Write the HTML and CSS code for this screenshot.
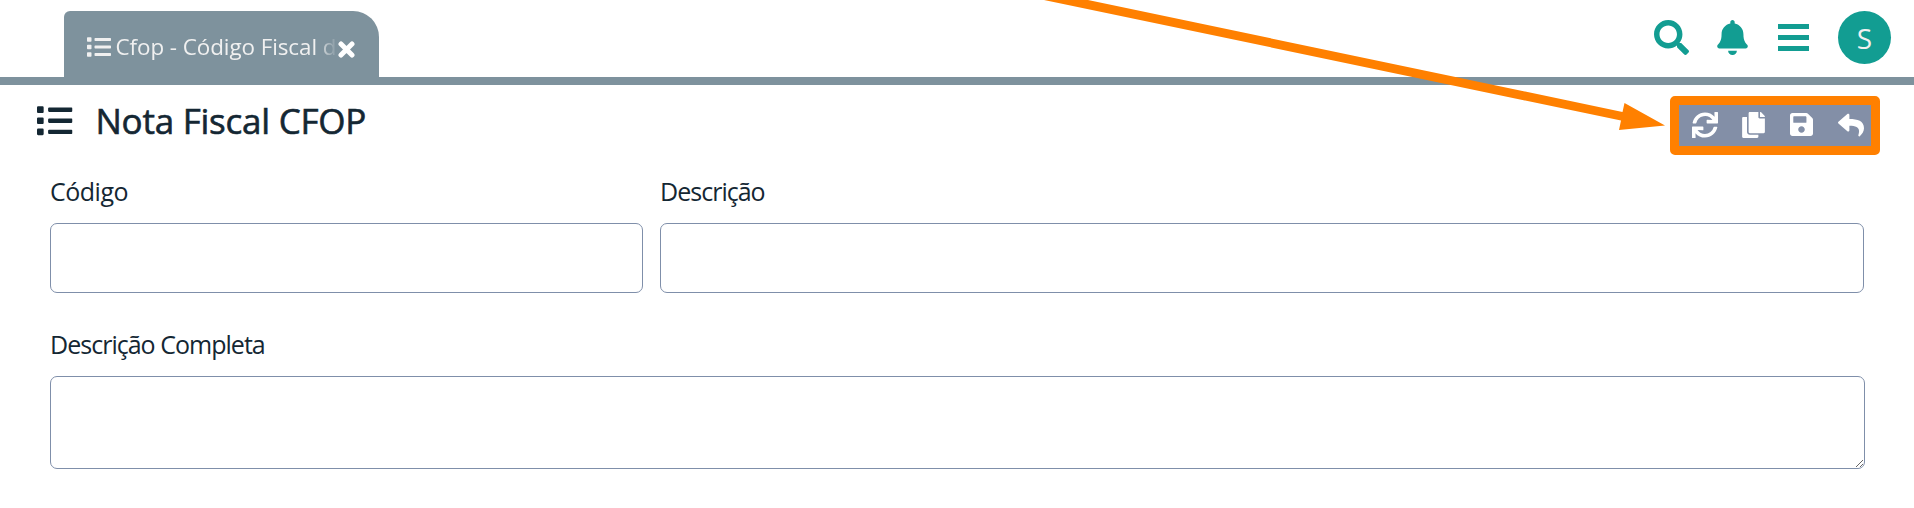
FILE: index.html
```html
<!DOCTYPE html>
<html lang="pt-BR">
<head>
<meta charset="utf-8">
<title>Nota Fiscal CFOP</title>
<link rel="stylesheet" href="styles.css">
</head>
<body>
<svg class="defs" width="0" height="0">
  <symbol id="list" viewBox="0 0 512 512"><path d="M80 368H16a16 16 0 0 0-16 16v64a16 16 0 0 0 16 16h64a16 16 0 0 0 16-16v-64a16 16 0 0 0-16-16zm0-320H16A16 16 0 0 0 0 64v64a16 16 0 0 0 16 16h64a16 16 0 0 0 16-16V64a16 16 0 0 0-16-16zm0 160H16a16 16 0 0 0-16 16v64a16 16 0 0 0 16 16h64a16 16 0 0 0 16-16v-64a16 16 0 0 0-16-16zm416 176H176a16 16 0 0 0-16 16v32a16 16 0 0 0 16 16h320a16 16 0 0 0 16-16v-32a16 16 0 0 0-16-16zm0-320H176a16 16 0 0 0-16 16v32a16 16 0 0 0 16 16h320a16 16 0 0 0 16-16V80a16 16 0 0 0-16-16zm0 160H176a16 16 0 0 0-16 16v32a16 16 0 0 0 16 16h320a16 16 0 0 0 16-16v-32a16 16 0 0 0-16-16z"/></symbol>
</svg>
<header class="topbar">
  <div class="tab">
    <svg class="tab-icon"><use href="#list"/></svg>
    <span class="tab-text">Cfop - Código Fiscal d</span>
    <svg class="tab-close" viewBox="0 0 17 17"><path d="M3 3l11 11M14 3L3 14"/></svg>
  </div>
  <nav class="actions">
    <svg class="i-search" viewBox="0 0 512 512"><path d="M505 442.7L405.3 343c-4.500-4.500-10.600-7-17-7H372c27.600-35.300 44-79.700 44-128C416 93.100 322.900 0 208 0S0 93.100 0 208s93.100 208 208 208c48.300 0 92.700-16.400 128-44v16.300c0 6.400 2.500 12.500 7 17l99.700 99.700c9.400 9.400 24.600 9.400 33.900 0l28.300-28.300c9.400-9.400 9.400-24.600.1-34zM208 336c-70.700 0-128-57.200-128-128 0-70.700 57.200-128 128-128 70.700 0 128 57.200 128 128 0 70.700-57.200 128-128 128z"/></svg>
    <svg class="i-bell" viewBox="0 0 448 512"><path d="M224 512c35.320 0 63.970-28.650 63.970-64H160.030c0 35.350 28.650 64 63.970 64zm215.390-149.710c-19.320-20.760-55.470-51.990-55.470-154.290 0-77.700-54.480-139.900-127.940-155.160V32c0-17.670-14.320-32-31.980-32s-31.980 14.330-31.980 32v20.840C118.560 68.100 64.080 130.300 64.080 208c0 102.300-36.150 133.530-55.470 154.290-6 6.450-8.660 14.160-8.610 21.710.11 16.400 12.980 32 32.100 32h383.800c19.120 0 32-15.600 32.100-32 .05-7.550-2.610-15.270-8.610-21.710z"/></svg>
    <svg class="i-bars" viewBox="0 0 31 27"><path d="M0 0h31v5H0zM0 11h31v5H0zM0 22h31v5H0z"/></svg>
    <span class="avatar">S</span>
  </nav>
</header>
<main class="page">
  <div class="heading">
    <svg class="title-icon"><use href="#list"/></svg>
    <h1 class="title">Nota Fiscal CFOP</h1>
    <div class="toolbar">
      <svg class="i-sync" viewBox="0 0 512 512"><path d="M440.650 12.570l4 82.770A247.160 247.160 0 0 0 255.830 8C134.730 8 33.910 94.920 12.290 209.820A12 12 0 0 0 24.090 224h49.050a12 12 0 0 0 11.670-9.260 175.910 175.910 0 0 1 317-56.940l-101.460-4.860a12 12 0 0 0-12.570 12v47.410a12 12 0 0 0 12 12H500a12 12 0 0 0 12-12V12a12 12 0 0 0-12-12h-47.370a12 12 0 0 0-11.980 12.570zM255.830 432a175.610 175.610 0 0 1-146-77.800l101.800 4.870a12 12 0 0 0 12.570-12v-47.400a12 12 0 0 0-12-12H12a12 12 0 0 0-12 12V500a12 12 0 0 0 12 12h47.350a12 12 0 0 0 12-12.600l-4.150-82.570A247.170 247.170 0 0 0 255.830 504c121.110 0 221.930-86.920 243.550-201.820a12 12 0 0 0-11.800-14.180h-49.050a12 12 0 0 0-11.670 9.260A175.860 175.860 0 0 1 255.830 432z"/></svg>
      <svg class="i-copy" viewBox="0 0 448 512"><path d="M320 448v40c0 13.255-10.745 24-24 24H24c-13.255 0-24-10.745-24-24V120c0-13.255 10.745-24 24-24h72v296c0 30.879 25.121 56 56 56h168zm0-344V0H152c-13.255 0-24 10.745-24 24v368c0 13.255 10.745 24 24 24h272c13.255 0 24-10.745 24-24V128H344c-13.200 0-24-10.800-24-24zm120.971-31.029L375.029 7.029A24 24 0 0 0 358.059 0H352v96h96v-6.059a24 24 0 0 0-7.029-16.970z"/></svg>
      <svg class="i-save" viewBox="0 32 448 448"><path d="M433.941 129.941l-83.882-83.882A48 48 0 0 0 316.118 32H48C21.490 32 0 53.490 0 80v352c0 26.510 21.490 48 48 48h352c26.510 0 48-21.490 48-48V163.882a48 48 0 0 0-14.059-33.941zM224 416c-35.346 0-64-28.654-64-64 0-35.346 28.654-64 64-64s64 28.654 64 64c0 35.346-28.654 64-64 64zm96-304.520V212c0 6.627-5.373 12-12 12H76c-6.627 0-12-5.373-12-12V108c0-6.627 5.373-12 12-12h228.520c3.183 0 6.235 1.264 8.485 3.515l3.480 3.480A11.996 11.996 0 0 1 320 111.480z"/></svg>
      <svg class="i-reply" viewBox="0 0 512 512"><path d="M8.309 189.836L184.313 37.851C199.719 24.546 224 35.347 224 56.015v80.053c160.629 1.839 288 34.032 288 186.258 0 61.441-39.581 122.309-83.333 154.132-13.653 9.931-33.111-2.533-28.077-18.631 45.344-145.012-21.507-183.510-176.590-185.742V360c0 20.700-24.300 31.453-39.687 18.164l-176.004-152c-11.071-9.562-11.086-26.753 0-36.328z"/></svg>
    </div>
  </div>
  <form class="form">
    <div class="row">
      <label class="field field-code">Código<input class="input" type="text"></label>
      <label class="field">Descrição<input class="input" type="text"></label>
    </div>
    <label class="field">Descrição Completa<textarea class="input area"></textarea></label>
  </form>
</main>
<svg class="arrow" viewBox="0 0 1914 508"><path d="M1044 0H1088L1622.500 112L1624.500 103L1665 125.500L1619 130L1621 120.500z"/></svg>
</body>
</html>
```
FILE: styles.css
```css
* { box-sizing: border-box; }
body {
  margin: 0;
  height: 508px;
  overflow: hidden;
  background: #fff;
  color: #142733;
  font-family: "Segoe UI", "Open Sans", "Noto Sans", sans-serif;
}
svg { display: block; flex: none; fill: currentColor; }
.defs { position: absolute; }

.topbar {
  display: flex;
  justify-content: space-between;
  height: 85px;
  padding: 11px 23px 0 64px;
  border-bottom: 8px solid #7e929d;
}
.tab {
  display: flex;
  width: 315px;
  height: 66px;
  padding-left: 22.500px;
  border-radius: 6px 26px 0 0;
  background: #7e929d;
  color: #f0f0f0;
}
.tab-icon { width: 24px; height: 24px; margin-top: 23.500px; }
.tab-text {
  width: 222px;
  margin: 19px 0 0 5px;
  white-space: nowrap;
  font-size: 22.400px;
  line-height: 34px;
  letter-spacing: -0.06px;
  -webkit-mask-image: linear-gradient(90deg, #000 200px, transparent 222px);
  mask-image: linear-gradient(90deg, #000 200px, transparent 222px);
}
.tab-close {
  width: 17px;
  height: 17px;
  margin-top: 30px;
  fill: none;
  stroke: #fff;
  stroke-width: 5;
  stroke-linecap: round;
}

.actions { display: flex; color: #129d92; }
.i-search { width: 35px; height: 35px; margin: 9px 28px 0 0; }
.i-bell { width: 31px; height: 35px; margin: 9px 30px 0 0; }
.i-bars { width: 31px; height: 27px; margin: 13px 29px 0 0; }
.avatar {
  width: 53px;
  height: 53px;
  border-radius: 50%;
  background: #129d92;
  color: #f0f0f0;
  font-size: 28px;
  line-height: 54px;
  text-align: center;
}

.page { padding: 11px 34px 0 37px; }
.heading { display: flex; height: 59px; }
.title-icon { width: 35.500px; height: 35.500px; margin-top: 7px; }
.title {
  flex: 1;
  margin: 0 0 0 23px;
  font-size: 35px;
  line-height: 49px;
  font-weight: 500;
  letter-spacing: -0.25px;
  -webkit-text-stroke: 0.6px currentColor;
}
.toolbar {
  display: flex;
  width: 210px;
  height: 59px;
  padding: 0 0 0 13px;
  border: 9px solid #ff8000;
  border-radius: 5px;
  background: #838fa7;
  color: #fff;
}
.i-sync { width: 26px; height: 26px; margin: 7px 24px 0 0; }
.i-copy { width: 23px; height: 26px; margin: 7px 25px 0 0; }
.i-save { width: 23px; height: 23px; margin: 8px 25px 0 0; }
.i-reply { width: 26px; height: 26px; margin-top: 7px; }

.form { margin: 17px 0 0 13px; font-size: 25px; }
.row { display: grid; grid-template-columns: 593px 1204px; gap: 17px; }
.field { display: block; line-height: 38px; letter-spacing: -0.98px; }
.field-code { letter-spacing: -0.5px; }
.input {
  display: block;
  width: 100%;
  height: 70px;
  margin: 13px 0 0;
  border: 1px solid #7f8faa;
  border-radius: 7px;
  background: #fff;
  font: inherit;
}
.row + .field { margin-top: 32px; }
.area { width: 1815px; height: 93px; resize: both; }

.arrow { position: absolute; inset: 0; width: 1914px; height: 508px; fill: #ff8000; pointer-events: none; }
```
